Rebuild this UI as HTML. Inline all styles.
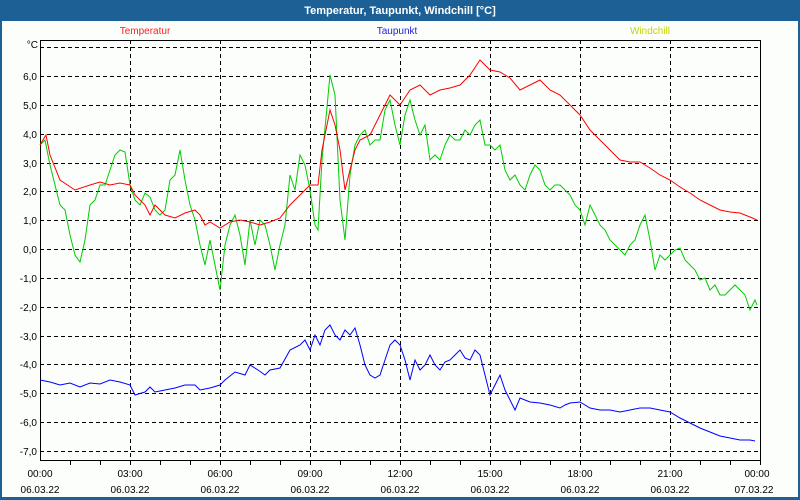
<!DOCTYPE html>
<html><head><meta charset="utf-8"><style>
html,body{margin:0;padding:0;width:800px;height:500px;overflow:hidden;background:#fcfefc;font-family:"Liberation Sans",sans-serif}
</style></head><body>
<svg width="800" height="500" xmlns="http://www.w3.org/2000/svg" font-family="Liberation Sans, sans-serif" font-size="10">
<rect x="0" y="0" width="800" height="500" fill="#1d6096"/>
<rect x="2" y="21" width="796" height="476" fill="#fcfefc"/>
<text x="400" y="14" fill="#fff" font-weight="bold" font-size="11" text-anchor="middle">Temperatur, Taupunkt, Windchill [°C]</text>
<text x="145" y="34" fill="#ff2020" text-anchor="middle">Temperatur</text>
<text x="397" y="34" fill="#2020e0" text-anchor="middle">Taupunkt</text>
<text x="650" y="34" fill="#c8d400" text-anchor="middle">Windchill</text>
<g stroke="#000" stroke-dasharray="4,3" stroke-width="1">
<path d="M40 47.5H760M40 76.5H760M40 105.5H760M40 134.5H760M40 163.5H760M40 191.5H760M40 220.5H760M40 249.5H760M40 278.5H760M40 307.5H760M40 336.5H760M40 364.5H760M40 393.5H760M40 422.5H760M40 451.5H760"/>
<path d="M130.5 40V460M220.5 40V460M310.5 40V460M400.5 40V460M490.5 40V460M580.5 40V460M670.5 40V460"/>
</g>
<rect x="40.5" y="40.5" width="720" height="420" fill="none" stroke="#000"/>
<g stroke="#000"><path d="M70.5 460v5M100.5 460v5M130.5 460v5M160.5 460v5M190.5 460v5M220.5 460v5M250.5 460v5M280.5 460v5M310.5 460v5M340.5 460v5M370.5 460v5M400.5 460v5M430.5 460v5M460.5 460v5M490.5 460v5M520.5 460v5M550.5 460v5M580.5 460v5M610.5 460v5M640.5 460v5M670.5 460v5M700.5 460v5M730.5 460v5M760.5 460v5"/></g>
<g text-anchor="end" fill="#000">
<text x="38" y="48">°C</text><text x="37" y="80">6,0</text><text x="37" y="109">5,0</text><text x="37" y="138">4,0</text><text x="37" y="167">3,0</text><text x="37" y="195">2,0</text><text x="37" y="224">1,0</text><text x="37" y="253">0,0</text><text x="37" y="282">-1,0</text><text x="37" y="311">-2,0</text><text x="37" y="340">-3,0</text><text x="37" y="368">-4,0</text><text x="37" y="397">-5,0</text><text x="37" y="426">-6,0</text><text x="37" y="455">-7,0</text>
</g>
<g text-anchor="middle" fill="#000">
<text x="40" y="477">00:00</text><text x="40" y="493">06.03.22</text>
<text x="130" y="477">03:00</text><text x="130" y="493">06.03.22</text>
<text x="220" y="477">06:00</text><text x="220" y="493">06.03.22</text>
<text x="310" y="477">09:00</text><text x="310" y="493">06.03.22</text>
<text x="400" y="477">12:00</text><text x="400" y="493">06.03.22</text>
<text x="490" y="477">15:00</text><text x="490" y="493">06.03.22</text>
<text x="580" y="477">18:00</text><text x="580" y="493">06.03.22</text>
<text x="670" y="477">21:00</text><text x="670" y="493">06.03.22</text>
<text x="757" y="477">00:00</text><text x="754" y="493">07.03.22</text>
</g>
<polyline fill="none" stroke="#00cc00" points="40,145 45,140 50,165 55,185 60,205 65,210 70,235 75,255 80,262 85,240 90,205 95,200 100,185 105,185 110,170 115,155 120,150 125,152 130,185 135,200 140,205 145,193 150,197 155,210 160,215 165,210 170,180 175,175 180,150 185,180 190,205 195,220 200,245 205,265 210,240 215,265 220,290 225,245 230,225 235,215 240,235 245,265 250,220 255,245 260,220 265,225 270,245 275,270 280,245 285,225 290,175 295,190 300,155 305,165 310,190 315,225 318,230 322,160 330,75 335,95 340,200 345,240 350,175 355,145 360,135 365,130 370,145 375,140 380,140 385,110 390,100 395,125 400,145 405,115 410,100 415,120 420,135 425,125 430,160 435,155 440,160 445,145 450,135 455,140 460,140 465,130 470,135 475,125 480,120 485,145 490,145 495,150 500,145 505,170 510,180 515,175 520,185 525,190 530,175 535,165 540,170 545,185 550,190 555,185 560,185 565,190 570,195 575,205 580,210 585,225 590,205 595,215 600,225 605,230 610,240 620,250 625,255 630,245 635,240 640,225 645,215 650,240 655,270 660,255 665,260 670,255 675,250 680,248 685,260 690,265 695,270 700,280 705,278 710,290 715,285 720,295 725,295 730,290 735,285 740,290 745,295 750,310 755,300 757,305"/>
<polyline fill="none" stroke="#ff0000" points="40,145 46,135 50,155 60,180 75,190 90,185 100,182 110,185 120,183 130,185 135,195 145,205 150,215 155,205 165,215 175,218 185,213 195,210 200,215 205,225 210,222 220,228 230,222 240,220 250,222 260,225 270,222 280,218 290,205 300,195 305,190 310,185 318,185 322,150 330,110 335,125 340,150 345,190 350,170 355,150 360,140 370,135 380,115 390,95 400,105 410,90 420,85 430,95 440,90 450,88 460,85 470,75 480,60 490,70 500,72 510,78 520,90 530,85 540,80 550,90 560,95 570,105 580,115 590,130 600,140 610,150 620,160 630,162 640,162 650,168 660,175 670,180 680,187 690,193 700,200 710,205 720,210 730,212 740,213 750,217 757,220"/>
<polyline fill="none" stroke="#0000ff" points="40,380 50,382 60,385 70,383 80,387 90,383 100,384 110,380 120,382 130,385 135,395 145,392 150,387 155,392 165,390 175,388 185,385 195,385 200,390 210,388 220,385 225,380 235,372 245,375 250,365 258,370 265,375 270,370 280,368 290,350 300,345 305,340 310,350 315,335 320,345 325,330 330,325 335,335 340,340 345,330 350,335 355,328 360,345 365,365 370,375 375,378 380,375 385,360 390,345 395,340 400,345 405,360 410,380 415,360 420,370 425,365 430,355 435,365 440,370 445,362 450,360 455,355 460,350 465,358 470,360 475,350 480,355 485,375 490,395 495,385 500,375 505,390 510,400 515,410 520,398 525,400 530,402 540,403 550,405 560,408 565,405 570,403 580,402 590,408 600,410 610,410 620,412 630,410 640,408 650,408 660,410 670,412 680,418 690,423 700,428 710,432 720,436 730,438 740,440 750,440 755,441"/>
</svg>
</body></html>
